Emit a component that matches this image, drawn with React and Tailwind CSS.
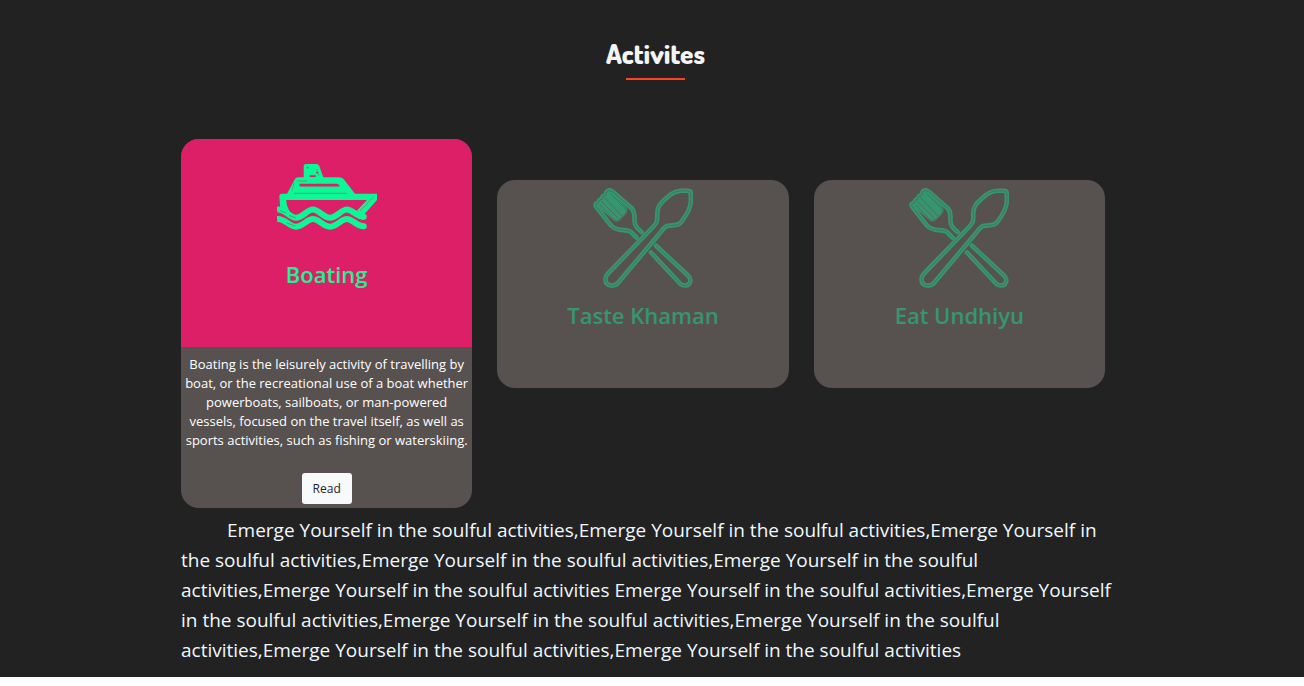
const LINE = 'Emerge Yourself in the soulful activities';

function BoatIcon() {
  return (
    <svg viewBox="0 0 100 100" className="h-[100px] w-[100px] text-[#0cf796]" fill="none" aria-hidden="true">
      <path
        fill="currentColor"
        fillRule="evenodd"
        d="M26.7 19Q26.7 17 29 17H39.5Q41.5 17 42.3 19L46.3 30.3H62Q65 30.3 67 32.5L78 46.8H100V53L84 71L78 68.5L80.5 63L90 53H9.3Q9.5 60.5 14.5 67L8 68L3.3 62L2.3 49Q2.3 47 5 46.8H10L18 32Q19 30.3 21 30.3H26.7ZM22.5 36.7V38.4Q22.5 39.5 24 39.5H62.6Q62 36.7 59.5 36.7ZM32.7 28.2V30H38.7V28.2Z"
      />
      <path stroke="#8a795f" strokeWidth="0.7" d="M17 46.3H70M20 34H30M17 36L15 43M39.5 22L42 29M96 50.5L83 64" />
      <path stroke="#8a4f5f" strokeWidth="1.2" d="M30 20.7H31.3M39 25.7H41.3M80 67.3H82" />
      <g stroke="currentColor" strokeWidth="6">
        <path d="M0 62.5C8 61 12 70.7 19 70.7S30 62.5 36 62.5S46 70.7 53 70.7S64 62.5 70 62.5S79 69.8 87 69.8" />
        <path d="M0 72C8 71 12 79.7 19 79.7S30 72 36 72S46 79.7 53 79.7S64 72 70 72S79 79.3 87 79.3" />
        <path strokeLinecap="round" d="M86 69.8H86.8M86 79.3H86.8" />
      </g>
      <path stroke="#74835f" strokeWidth="0.8" d="M3 63.5L9 66M12 68.5L19 71M10 76L18 79" />
    </svg>
  );
}

const CUTLERY = [
  'M95 2.8Q97.8 2.8 97.8 5.5V14C97.5 21 92 29 88.5 33.8C85 39.5 77 36 73 38.5C70 40.5 69 42.5 67 45L24.5 95.5Q22 98 18 97.5Q12.5 97 12.5 91Q12.5 88 15 85.5L60 39C65 34 64 33 64.3 25C64.5 17 69 14 74 9.5C79 5 83 2.8 89 2.8Z',
  'M63 57.7L95 87.5C98 90 97.8 94 96 96C94 98 90 98 87.5 96L58 64.5',
  'M48.5 44C43 39 42 38 41.5 33C41.2 28 42.5 25 39 20.5L19.5 3.5Q16 1 13.5 4L12.5 7.5Q9 7 9 11.5Q5.5 11 5.5 15Q1.5 15 3 18.5L18 37.5C25 45 33 40 38 44L43.5 49.5',
];

function CutleryIcon() {
  return (
    <svg viewBox="0 0 100 100" className="h-[100px] w-[100px] text-[#379670]" fill="none" strokeLinecap="round" strokeLinejoin="round" aria-hidden="true">
      <path fill="currentColor" d="M16 2L33 19Q36 22 33 26L27 32Q23 35 20 32L3 17L6 12L11 7Z" />
      <g stroke="currentColor" strokeWidth="4.6">
        {CUTLERY.map((d) => <path key={d} d={d} />)}
      </g>
      <g stroke="#476a5d" strokeWidth="0.8">
        {CUTLERY.map((d) => <path key={d} d={d} />)}
        <path d="M18 6L32 20Q35 23 32 26.5L26 31.5Q23 34 20 31L7 17M11 9L28.5 27.5M8 13L25 30" />
      </g>
    </svg>
  );
}

function CardFace({ icon, title, tone }) {
  return (
    <div className={`flex h-52 flex-col items-center pt-2 ${tone}`}>
      {icon}
      <h2 className="mt-3 text-[22px] leading-[30px] font-semibold">{title}</h2>
    </div>
  );
}

export default function App() {
  return (
    <main className="bg-white font-['Segoe_UI','Selawik','Open_Sans','Noto_Sans',sans-serif]">
      <section className="bg-[#222222] px-6 pt-[35px] pb-3">
        <header className="flex flex-col items-center pl-[7px]">
          <h1 className="font-['Dosis','Open_Sans',sans-serif] text-[27px] leading-9 font-extrabold text-[#f4f4f4]">Activites</h1>
          <div className="mt-[7px] h-0.5 w-[59px] bg-[#ff4321]" />
        </header>
        <div className="mx-auto mt-[59px] max-w-[942px] pr-[18px]">
          <div className="grid grid-cols-3 items-start gap-[25px]">
            <article className="overflow-hidden rounded-[18px] bg-[#575250]">
              <CardFace icon={<BoatIcon />} title="Boating" tone="bg-[#dc1f66] text-[#1ef394]" />
              <div className="flex flex-col items-center px-[3px] pt-2 pb-1 text-center">
                <p className="text-[13px] leading-[19px] font-medium text-white">
                  Boating is the leisurely activity of travelling by boat, or the recreational use of a boat whether powerboats, sailboats, or man-powered vessels, focused on the travel itself, as well as sports activities, such as fishing or waterskiing.
                </p>
                <button type="button" className="mt-[23px] h-[31px] rounded-[3px] bg-[#f8f9fa] px-[11px] text-[12px] text-[#212529]">Read</button>
              </div>
            </article>
            <article className="mt-[41px] overflow-hidden rounded-[18px] bg-[#575250]">
              <CardFace icon={<CutleryIcon />} title="Taste Khaman" tone="text-[#379670]" />
            </article>
            <article className="mt-[41px] overflow-hidden rounded-[18px] bg-[#575250]">
              <CardFace icon={<CutleryIcon />} title="Eat Undhiyu" tone="text-[#379670]" />
            </article>
          </div>
          <p className="-mr-2 mt-[7px] indent-[46px] text-[19px] leading-[30px] text-[#f0f8ff]">
            {`${LINE},${LINE},${LINE},${LINE},${LINE},${LINE} ${LINE},${LINE},${LINE},${LINE},${LINE},${LINE}`}
          </p>
        </div>
      </section>
    </main>
  );
}
